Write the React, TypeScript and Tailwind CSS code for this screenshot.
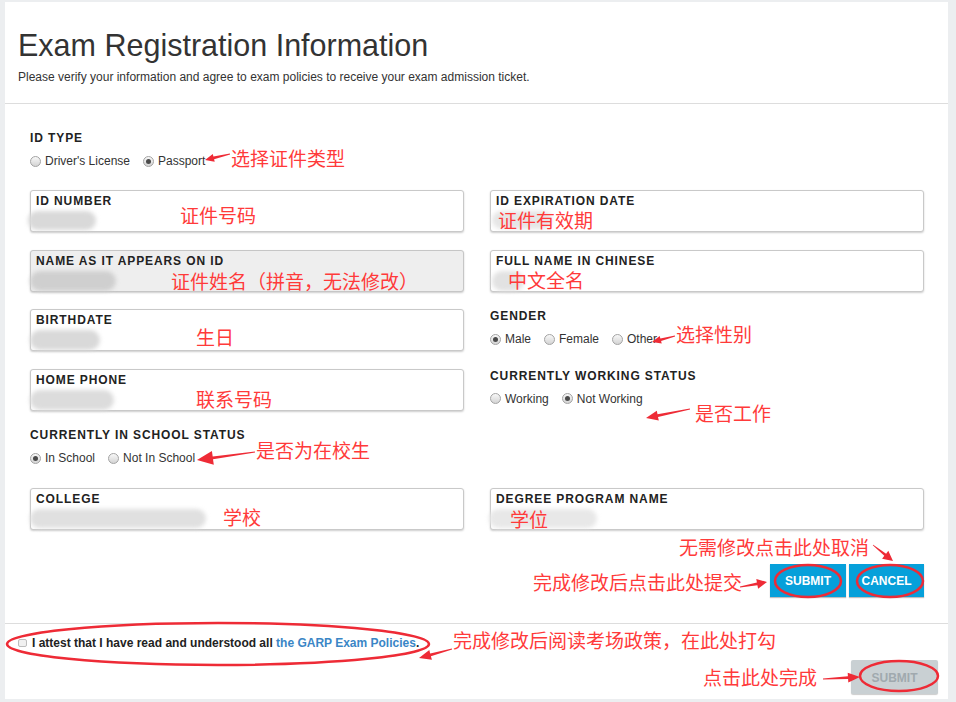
import React from "react";

type Pt = [number, number];

function arrowPoints(tail: Pt, tip: Pt, L: number, W: number): string {
  const dx = tip[0] - tail[0];
  const dy = tip[1] - tail[1];
  const len = Math.hypot(dx, dy);
  const ux = dx / len;
  const uy = dy / len;
  const nx = -uy;
  const ny = ux;
  const bx = tip[0] - ux * L;
  const by = tip[1] - uy * L;
  const t0 = 0.4;
  const t1 = 1.4;
  const pts: Pt[] = [
    [tail[0] + nx * t0, tail[1] + ny * t0],
    [bx + nx * t1, by + ny * t1],
    [bx + nx * W, by + ny * W],
    tip,
    [bx - nx * W, by - ny * W],
    [bx - nx * t1, by - ny * t1],
    [tail[0] - nx * t0, tail[1] - ny * t0],
  ];
  return pts.map((p) => `${p[0].toFixed(1)},${p[1].toFixed(1)}`).join(" ");
}

const arrows: { tail: Pt; tip: Pt; L: number; W: number }[] = [
  { tail: [230, 154], tip: [205, 160], L: 9, W: 4 },
  { tail: [675, 336], tip: [652, 342], L: 9, W: 4 },
  { tail: [255, 452], tip: [197, 460], L: 16, W: 7 },
  { tail: [690, 409], tip: [646, 418], L: 12, W: 5 },
  { tail: [873, 545], tip: [893, 561], L: 10, W: 5 },
  { tail: [740, 587], tip: [767, 582], L: 10, W: 5 },
  { tail: [452, 649], tip: [419, 658], L: 12, W: 5 },
  { tail: [823, 679], tip: [860, 677], L: 12, W: 5 },
];

function Radio({ checked, label }: { checked?: boolean; label: string }) {
  return (
    <span className="flex items-center gap-[4px]">
      <span className="flex h-[11px] w-[11px] items-center justify-center rounded-full border border-[#a3a3a3] bg-linear-to-b from-[#f8f8f8] to-[#d4d4d4]">
        {checked && <span className="h-[5px] w-[5px] rounded-full bg-[#4a4a4a]" />}
      </span>
      <span>{label}</span>
    </span>
  );
}

function Label({ children }: { children: React.ReactNode }) {
  return (
    <div className="text-[12px] font-bold leading-[14px] tracking-[0.9px] text-[#222]">
      {children}
    </div>
  );
}

function Group({
  label,
  options,
}: {
  label: string;
  options: { label: string; checked?: boolean }[];
}) {
  return (
    <div className="flex flex-col">
      <Label>{label}</Label>
      <div className="mt-[8px] flex h-[16px] items-center gap-[13px] text-[12px] text-[#333]">
        {options.map((o) => (
          <Radio key={o.label} label={o.label} checked={o.checked} />
        ))}
      </div>
    </div>
  );
}

function Field({
  label,
  blob,
  gray,
}: {
  label: string;
  blob: string;
  gray?: boolean;
}) {
  return (
    <div
      className={
        gray
          ? "h-[42px] rounded-[3px] border border-[#c6c6c6] bg-[#eeeeee] pl-[5px] pt-[3px] shadow-[0_1px_2px_rgba(0,0,0,0.2)]"
          : "h-[42px] rounded-[3px] border border-[#c9c9c9] bg-white pl-[5px] pt-[3px] shadow-[0_1px_2px_rgba(0,0,0,0.2)]"
      }
    >
      <Label>{label}</Label>
      <div className={blob} />
    </div>
  );
}

function Note({ cls, text }: { cls: string; text: string }) {
  return (
    <span
      className={
        "absolute whitespace-nowrap font-['Noto_Sans_CJK_SC',sans-serif] text-[19px] leading-[19px] text-[#ff3a3a] " +
        cls
      }
    >
      {text}
    </span>
  );
}

export default function App() {
  return (
    <div className="relative h-[702px] w-[956px] overflow-hidden bg-[#eceef0] pl-[5px] pt-[2px] font-['Liberation_Sans',Arial,sans-serif] text-[#333]">
      <div className="flex h-[697px] w-[943px] flex-col bg-white">
        {/* header */}
        <div className="h-[102px] border-b border-[#dddddd] px-[13px] pt-[25px]">
          <h1 className="text-[30.5px] leading-[36px] font-normal text-[#333]">
            Exam Registration Information
          </h1>
          <p className="mt-[6px] text-[12px] leading-[16px] text-[#333]">
            Please verify your information and agree to exam policies to receive your exam admission ticket.
          </p>
        </div>

        {/* form */}
        <div className="pl-[25px] pr-[24px] pt-[27px]">
          <Group
            label="ID TYPE"
            options={[{ label: "Driver's License" }, { label: "Passport", checked: true }]}
          />

          <div className="mt-[21px] grid auto-rows-[42px] grid-cols-[434px_434px] gap-x-[26px] gap-y-[17.5px]">
            <Field
              label="ID NUMBER"
              blob="-ml-[8px] mt-[3px] h-[19px] w-[68px] rounded-full bg-[#d9d9d9] blur-[2px]"
            />
            <Field
              label="ID EXPIRATION DATE"
              blob="-ml-[4px] mt-[3px] h-[18px] w-[60px] rounded-full bg-[#e6e6e6] blur-[2px]"
            />

            <Field
              gray
              label="NAME AS IT APPEARS ON ID"
              blob="-ml-[6px] mt-[3px] h-[20px] w-[86px] rounded-full bg-[#cfcfcf] blur-[2px]"
            />
            <Field
              label="FULL NAME IN CHINESE"
              blob="-ml-[4px] mt-[3px] h-[20px] w-[32px] rounded-full bg-[#e2e2e2] blur-[2px]"
            />

            <Field
              label="BIRTHDATE"
              blob="-ml-[6px] mt-[3px] h-[20px] w-[70px] rounded-full bg-[#d9d9d9] blur-[2px]"
            />
            <Group
              label="GENDER"
              options={[{ label: "Male", checked: true }, { label: "Female" }, { label: "Other" }]}
            />

            <Field
              label="HOME PHONE"
              blob="-ml-[6px] mt-[3px] h-[20px] w-[84px] rounded-full bg-[#dcdcdc] blur-[2px]"
            />
            <Group
              label="CURRENTLY WORKING STATUS"
              options={[{ label: "Working" }, { label: "Not Working", checked: true }]}
            />

            <Group
              label="CURRENTLY IN SCHOOL STATUS"
              options={[{ label: "In School", checked: true }, { label: "Not In School" }]}
            />
            <div />

            <Field
              label="COLLEGE"
              blob="-ml-[6px] mt-[3px] h-[19px] w-[176px] rounded-full bg-[#e0e0e0] blur-[2px]"
            />
            <Field
              label="DEGREE PROGRAM NAME"
              blob="-ml-[7px] mt-[3px] h-[19px] w-[108px] rounded-full bg-[#e8e8e8] blur-[2px]"
            />
          </div>

          <div className="mt-[34px] flex justify-end gap-[3px]">
            <button className="h-[33px] w-[76px] bg-[#06a0da] pt-[2px] text-[12px] font-bold text-white shadow-[0_1px_1px_rgba(0,0,0,0.25)]">
              SUBMIT
            </button>
            <button className="h-[33px] w-[75px] bg-[#06a0da] pt-[2px] text-[12px] font-bold text-white shadow-[0_1px_1px_rgba(0,0,0,0.25)]">
              CANCEL
            </button>
          </div>
        </div>

        {/* footer */}
        <div className="mt-[26px] flex flex-1 flex-col border-t border-[#dddddd] pl-[13px] pr-[10px] pt-[12px]">
          <div className="flex items-center gap-[5px] text-[12px] leading-[14px] font-bold text-[#222]">
            <span className="h-[8px] w-[9px] rounded-[2px] border border-[#bdbdbd] bg-[#f0f0f0]" />
            <span>
              I attest that I have read and understood all{" "}
              <span className="text-[#3a86c6]">the GARP Exam Policies</span>.
            </span>
          </div>
          <div className="mt-[10px] flex justify-end">
            <button className="h-[34px] w-[87px] rounded-[2px] bg-[#c9d0d3] pt-[2px] text-[12px] font-bold text-[#a0a9ae] shadow-[0_1px_1px_rgba(0,0,0,0.2)]">
              SUBMIT
            </button>
          </div>
        </div>
      </div>

      {/* annotation overlay */}
      <svg
        className="pointer-events-none absolute left-0 top-0"
        width="956"
        height="702"
        viewBox="0 0 956 702"
      >
        <g fill="none" stroke="#ee2b36" strokeWidth="2.5">
          <ellipse cx="808" cy="581" rx="33" ry="16" />
          <ellipse cx="890" cy="581" rx="33" ry="16" />
          <ellipse cx="218" cy="644" rx="211" ry="21" />
          <ellipse cx="899" cy="676" rx="39" ry="15" />
        </g>
        <g fill="#ee2b36">
          {arrows.map((a, i) => (
            <polygon key={i} points={arrowPoints(a.tail, a.tip, a.L, a.W)} />
          ))}
        </g>
      </svg>

      <Note cls="left-[231px] top-[148px]" text="选择证件类型" />
      <Note cls="left-[180px] top-[205px]" text="证件号码" />
      <Note cls="left-[498px] top-[210px]" text="证件有效期" />
      <Note cls="left-[171px] top-[271px]" text="证件姓名（拼音，无法修改）" />
      <Note cls="left-[508px] top-[270px]" text="中文全名" />
      <Note cls="left-[196px] top-[327px]" text="生日" />
      <Note cls="left-[676px] top-[324px]" text="选择性别" />
      <Note cls="left-[196px] top-[389px]" text="联系号码" />
      <Note cls="left-[256px] top-[440px]" text="是否为在校生" />
      <Note cls="left-[695px] top-[403px]" text="是否工作" />
      <Note cls="left-[223px] top-[507px]" text="学校" />
      <Note cls="left-[510px] top-[509px]" text="学位" />
      <Note cls="left-[679px] top-[537px]" text="无需修改点击此处取消" />
      <Note cls="left-[533px] top-[572px]" text="完成修改后点击此处提交" />
      <Note cls="left-[453px] top-[630px]" text="完成修改后阅读考场政策，在此处打勾" />
      <Note cls="left-[703px] top-[667px]" text="点击此处完成" />
    </div>
  );
}
